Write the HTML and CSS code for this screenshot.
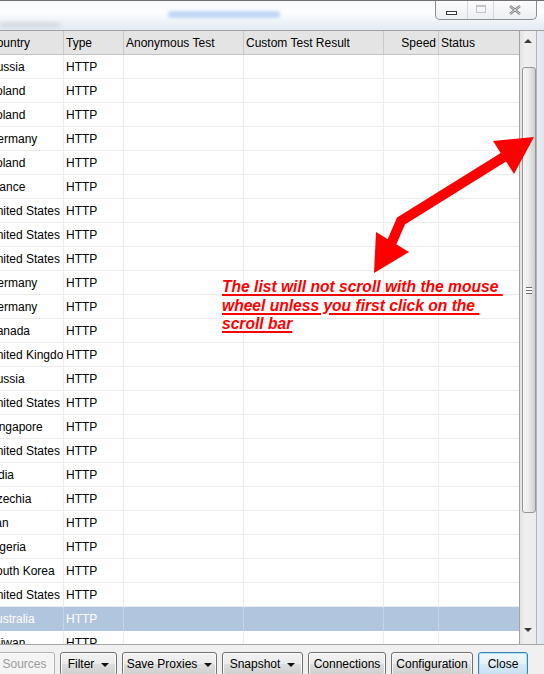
FILE: index.html
```html
<!DOCTYPE html>
<html>
<head>
<meta charset="utf-8">
<link rel="stylesheet" href="styles.css">
</head>
<body>
<div class="titlebar">
  <div class="title-left">
    <div class="smudge"></div>
    <div class="blur-title"></div>
  </div>
  <div class="winbtns">
    <div class="wb wb-min"><span class="ico-min"></span></div>
    <div class="wb wb-max"><span class="ico-max"></span></div>
    <div class="wb wb-close"><svg width="12" height="10" viewBox="0 0 12 10"><path d="M1 1 L11 9 M11 1 L1 9" stroke="#7a7a7a" stroke-width="2.4" fill="none"/><path d="M1 1 L11 9 M11 1 L1 9" stroke="#f4f4f4" stroke-width="0.8" fill="none"/></svg></div>
  </div>
</div>

<div class="main">
  <div class="table">
    <div class="row head">
      <div class="c">Country</div><div class="c">Type</div><div class="c">Anonymous Test</div><div class="c">Custom Test Result</div><div class="c r">Speed</div><div class="c">Status</div>
    </div>
    <div class="row"><div class="c">Russia</div><div class="c">HTTP</div><div class="c"></div><div class="c"></div><div class="c"></div><div class="c"></div></div>
    <div class="row"><div class="c">Poland</div><div class="c">HTTP</div><div class="c"></div><div class="c"></div><div class="c"></div><div class="c"></div></div>
    <div class="row"><div class="c">Poland</div><div class="c">HTTP</div><div class="c"></div><div class="c"></div><div class="c"></div><div class="c"></div></div>
    <div class="row"><div class="c">Germany</div><div class="c">HTTP</div><div class="c"></div><div class="c"></div><div class="c"></div><div class="c"></div></div>
    <div class="row"><div class="c">Poland</div><div class="c">HTTP</div><div class="c"></div><div class="c"></div><div class="c"></div><div class="c"></div></div>
    <div class="row"><div class="c">France</div><div class="c">HTTP</div><div class="c"></div><div class="c"></div><div class="c"></div><div class="c"></div></div>
    <div class="row"><div class="c">United States</div><div class="c">HTTP</div><div class="c"></div><div class="c"></div><div class="c"></div><div class="c"></div></div>
    <div class="row"><div class="c">United States</div><div class="c">HTTP</div><div class="c"></div><div class="c"></div><div class="c"></div><div class="c"></div></div>
    <div class="row"><div class="c">United States</div><div class="c">HTTP</div><div class="c"></div><div class="c"></div><div class="c"></div><div class="c"></div></div>
    <div class="row"><div class="c">Germany</div><div class="c">HTTP</div><div class="c"></div><div class="c"></div><div class="c"></div><div class="c"></div></div>
    <div class="row"><div class="c">Germany</div><div class="c">HTTP</div><div class="c"></div><div class="c"></div><div class="c"></div><div class="c"></div></div>
    <div class="row"><div class="c">Canada</div><div class="c">HTTP</div><div class="c"></div><div class="c"></div><div class="c"></div><div class="c"></div></div>
    <div class="row"><div class="c">United Kingdom</div><div class="c">HTTP</div><div class="c"></div><div class="c"></div><div class="c"></div><div class="c"></div></div>
    <div class="row"><div class="c">Russia</div><div class="c">HTTP</div><div class="c"></div><div class="c"></div><div class="c"></div><div class="c"></div></div>
    <div class="row"><div class="c">United States</div><div class="c">HTTP</div><div class="c"></div><div class="c"></div><div class="c"></div><div class="c"></div></div>
    <div class="row"><div class="c">Singapore</div><div class="c">HTTP</div><div class="c"></div><div class="c"></div><div class="c"></div><div class="c"></div></div>
    <div class="row"><div class="c">United States</div><div class="c">HTTP</div><div class="c"></div><div class="c"></div><div class="c"></div><div class="c"></div></div>
    <div class="row"><div class="c">India</div><div class="c">HTTP</div><div class="c"></div><div class="c"></div><div class="c"></div><div class="c"></div></div>
    <div class="row"><div class="c">Czechia</div><div class="c">HTTP</div><div class="c"></div><div class="c"></div><div class="c"></div><div class="c"></div></div>
    <div class="row"><div class="c">Iran</div><div class="c">HTTP</div><div class="c"></div><div class="c"></div><div class="c"></div><div class="c"></div></div>
    <div class="row"><div class="c">Nigeria</div><div class="c">HTTP</div><div class="c"></div><div class="c"></div><div class="c"></div><div class="c"></div></div>
    <div class="row"><div class="c">South Korea</div><div class="c">HTTP</div><div class="c"></div><div class="c"></div><div class="c"></div><div class="c"></div></div>
    <div class="row"><div class="c">United States</div><div class="c">HTTP</div><div class="c"></div><div class="c"></div><div class="c"></div><div class="c"></div></div>
    <div class="row sel"><div class="c">Australia</div><div class="c">HTTP</div><div class="c"></div><div class="c"></div><div class="c"></div><div class="c"></div></div>
    <div class="row"><div class="c">Taiwan</div><div class="c">HTTP</div><div class="c"></div><div class="c"></div><div class="c"></div><div class="c"></div></div>
  </div>
  <div class="scrollbar">
    <div class="sb-up"><span class="tri-up"></span></div>
    <div class="thumb"><span class="grip"></span></div>
    <div class="sb-fill"></div>
    <div class="sb-down"><span class="tri-down"></span></div>
  </div>
  <div class="frame"></div>
</div>

<div class="buttons">
  <div class="btn dis w-src">Sources</div>
  <div class="btn w-filter">Filter<span class="dd"></span></div>
  <div class="btn w-save">Save Proxies<span class="dd"></span></div>
  <div class="btn w-snap">Snapshot<span class="dd"></span></div>
  <div class="btn w-conn">Connections</div>
  <div class="btn w-conf">Configuration</div>
  <div class="btn focus w-close">Close</div>
</div>

<svg class="arrow" width="544" height="674" viewBox="0 0 544 674">
  <polyline points="507,155 401,221 391,244" fill="none" stroke="#ff0000" stroke-width="10" stroke-linejoin="miter"/>
  <polygon points="534,137 493,141 514,174" fill="#ff0000"/>
  <polygon points="374,273 376,232 409,252" fill="#ff0000"/>
</svg>

<div class="note"><div class="ln">The list will not scroll with the mouse </div><div class="ln">wheel unless you first click on the </div><div class="ln">scroll bar</div></div>
</body>
</html>
```

FILE: styles.css
```css
html, body {
  margin: 0;
  padding: 0;
}
body {
  width: 544px;
  height: 674px;
  overflow: hidden;
  position: relative;
  background: #f0f0f0;
  font-family: "Liberation Sans", Arial, sans-serif;
  font-size: 12px;
  color: #000;
}

/* Title bar */
.titlebar {
  height: 30px;
  box-sizing: border-box;
  border-top: 1px solid #707070;
  background: linear-gradient(#f7f9fb, #fbfdff 40%, #e4eaf1);
  display: flex;
  justify-content: space-between;
  overflow: hidden;
}
.title-left {
  position: relative;
  flex: 1;
}
.smudge {
  position: absolute;
  left: 0;
  top: 22px;
  width: 60px;
  height: 4px;
  background: #cdd2d8;
  filter: blur(2px);
}
.blur-title {
  position: absolute;
  left: 168px;
  top: 10px;
  width: 112px;
  height: 7px;
  border-radius: 4px;
  background: #c2d8f5;
  filter: blur(1.5px);
}
.winbtns {
  display: flex;
  margin-right: 7px;
  height: 19px;
  box-sizing: border-box;
  border: 1px solid #8e8e8e;
  border-top: none;
  border-radius: 0 0 5px 5px;
  background: linear-gradient(#fcfcfd, #eceff3);
  overflow: hidden;
}
.wb {
  display: flex;
  align-items: center;
  justify-content: center;
  height: 100%;
}
.wb-min { width: 31px; border-right: 1px solid #d4d8dd; }
.wb-max { width: 25px; border-right: 1px solid #d4d8dd; }
.wb-close { width: 42px; }
.ico-min {
  width: 9px;
  height: 2px;
  margin-top: 5px;
  border: 1px solid #3b3b3b;
  background: #fff;
}
.ico-max {
  width: 8px;
  height: 5px;
  border: 1px solid #c4c4c4;
  border-top-width: 2px;
  margin-top: -3px;
}

/* Main area */
.main {
  display: flex;
  height: 615px;
  box-sizing: border-box;
  border-top: 1px solid #a0a0a0;
  border-bottom: 1px solid #a7a7a7;
}
.table {
  width: 519px;
  overflow: hidden;
  background: #fff;
}
.row {
  display: grid;
  grid-template-columns: 78px 60px 120px 140px 55px 80px;
  height: 24px;
  margin-left: -14px;
}
.c {
  box-sizing: border-box;
  height: 24px;
  line-height: 23px;
  padding: 1px 2px 0;
  border-right: 1px solid #ececec;
  border-bottom: 1px solid #ececec;
  white-space: nowrap;
  overflow: hidden;
}
.c:last-child { border-right: none; }
.c.r { text-align: right; }
.head {
  background: #e4e4e4;
}
.head .c {
  border-right-color: #c9c9c9;
  border-bottom-color: #c4c4c4;
}
.sel {
  background: #b2c5de;
  color: #fff;
}
.sel .c { border-bottom-color: #b2c5de; border-right-color: #c6d4e7; }

/* Scrollbar */
.scrollbar {
  width: 18px;
  box-sizing: border-box;
  border-left: 1px solid #a3a3a3;
  border-right: 1px solid #b5b5b5;
  background: linear-gradient(to right, #e3e3e3, #efefef 30%, #ececec);
  display: flex;
  flex-direction: column;
  align-items: center;
}
.sb-up {
  height: 36px;
  flex: none;
  display: flex;
  justify-content: center;
  padding-top: 8px;
  box-sizing: border-box;
}
.tri-up {
  width: 0; height: 0;
  border-left: 4px solid transparent;
  border-right: 4px solid transparent;
  border-bottom: 4px solid #3a3a3a;
}
.thumb {
  flex: none;
  width: 14px;
  height: 446px;
  box-sizing: border-box;
  margin-left: 1px;
  border: 1px solid #979797;
  border-radius: 3px;
  background: linear-gradient(to right, #f5f5f5, #ececec 45%, #dadada 80%, #cfcfcf);
  display: flex;
  align-items: center;
  justify-content: center;
}
.grip {
  width: 6px;
  height: 5px;
  border-top: 1px solid #6d6d6d;
  border-bottom: 1px solid #6d6d6d;
  background: linear-gradient(#fff 0 2px, #6d6d6d 2px 3px, #fff 3px);
}
.sb-fill { flex: 1; }
.sb-down {
  height: 20px;
  flex: none;
  display: flex;
  justify-content: center;
  padding-top: 4px;
  box-sizing: border-box;
}
.tri-down {
  width: 0; height: 0;
  border-left: 4px solid transparent;
  border-right: 4px solid transparent;
  border-top: 4px solid #3a3a3a;
}
.frame {
  flex: 1;
  background: linear-gradient(to right, #e9edf1, #dfe6ed);
}

/* Buttons */
.buttons {
  display: flex;
  gap: 5px;
  padding-top: 7px;
  margin-left: -6px;
}
.btn {
  flex: none;
  height: 24px;
  box-sizing: border-box;
  border: 1px solid #707070;
  border-radius: 3px;
  background: linear-gradient(#f2f2f2, #ebebeb 48%, #dddddd 52%, #cfcfcf);
  box-shadow: inset 0 0 0 1px #fbfbfb;
  display: flex;
  align-items: center;
  justify-content: center;
  line-height: 20px;
  white-space: nowrap;
}
.btn.dis {
  color: #9a9a9a;
  border-color: #adb2b5;
  background: #f4f4f4;
}
.btn.focus {
  border-color: #3c7fb1;
  box-shadow: inset 0 0 0 1px #aee0f7;
  background: linear-gradient(#eef7fc, #e5f1f9 48%, #d6e9f5 52%, #c9e1f1);
}
.dd {
  width: 0; height: 0;
  margin-left: 7px;
  margin-top: 1px;
  border-left: 4px solid transparent;
  border-right: 4px solid transparent;
  border-top: 4px solid #111;
}
.w-src { width: 61px; }
.w-filter { width: 57px; }
.w-save { width: 95px; }
.w-snap { width: 81px; }
.w-conn { width: 78px; }
.w-conf { width: 82px; }
.w-close { width: 50px; }

/* Annotation overlay */
.arrow {
  position: absolute;
  left: 0;
  top: 0;
  pointer-events: none;
}
.note {
  position: absolute;
  left: 222px;
  top: 278px;
  font-family: "Liberation Sans", Arial, sans-serif;
  font-size: 15.6px;
  font-weight: bold;
  font-style: italic;
  line-height: 18.5px;
  color: #ff0000;
}
.ln {
  white-space: pre;
  text-decoration: underline;
  text-decoration-thickness: 2px;
  text-underline-offset: 1.5px;
}
```
